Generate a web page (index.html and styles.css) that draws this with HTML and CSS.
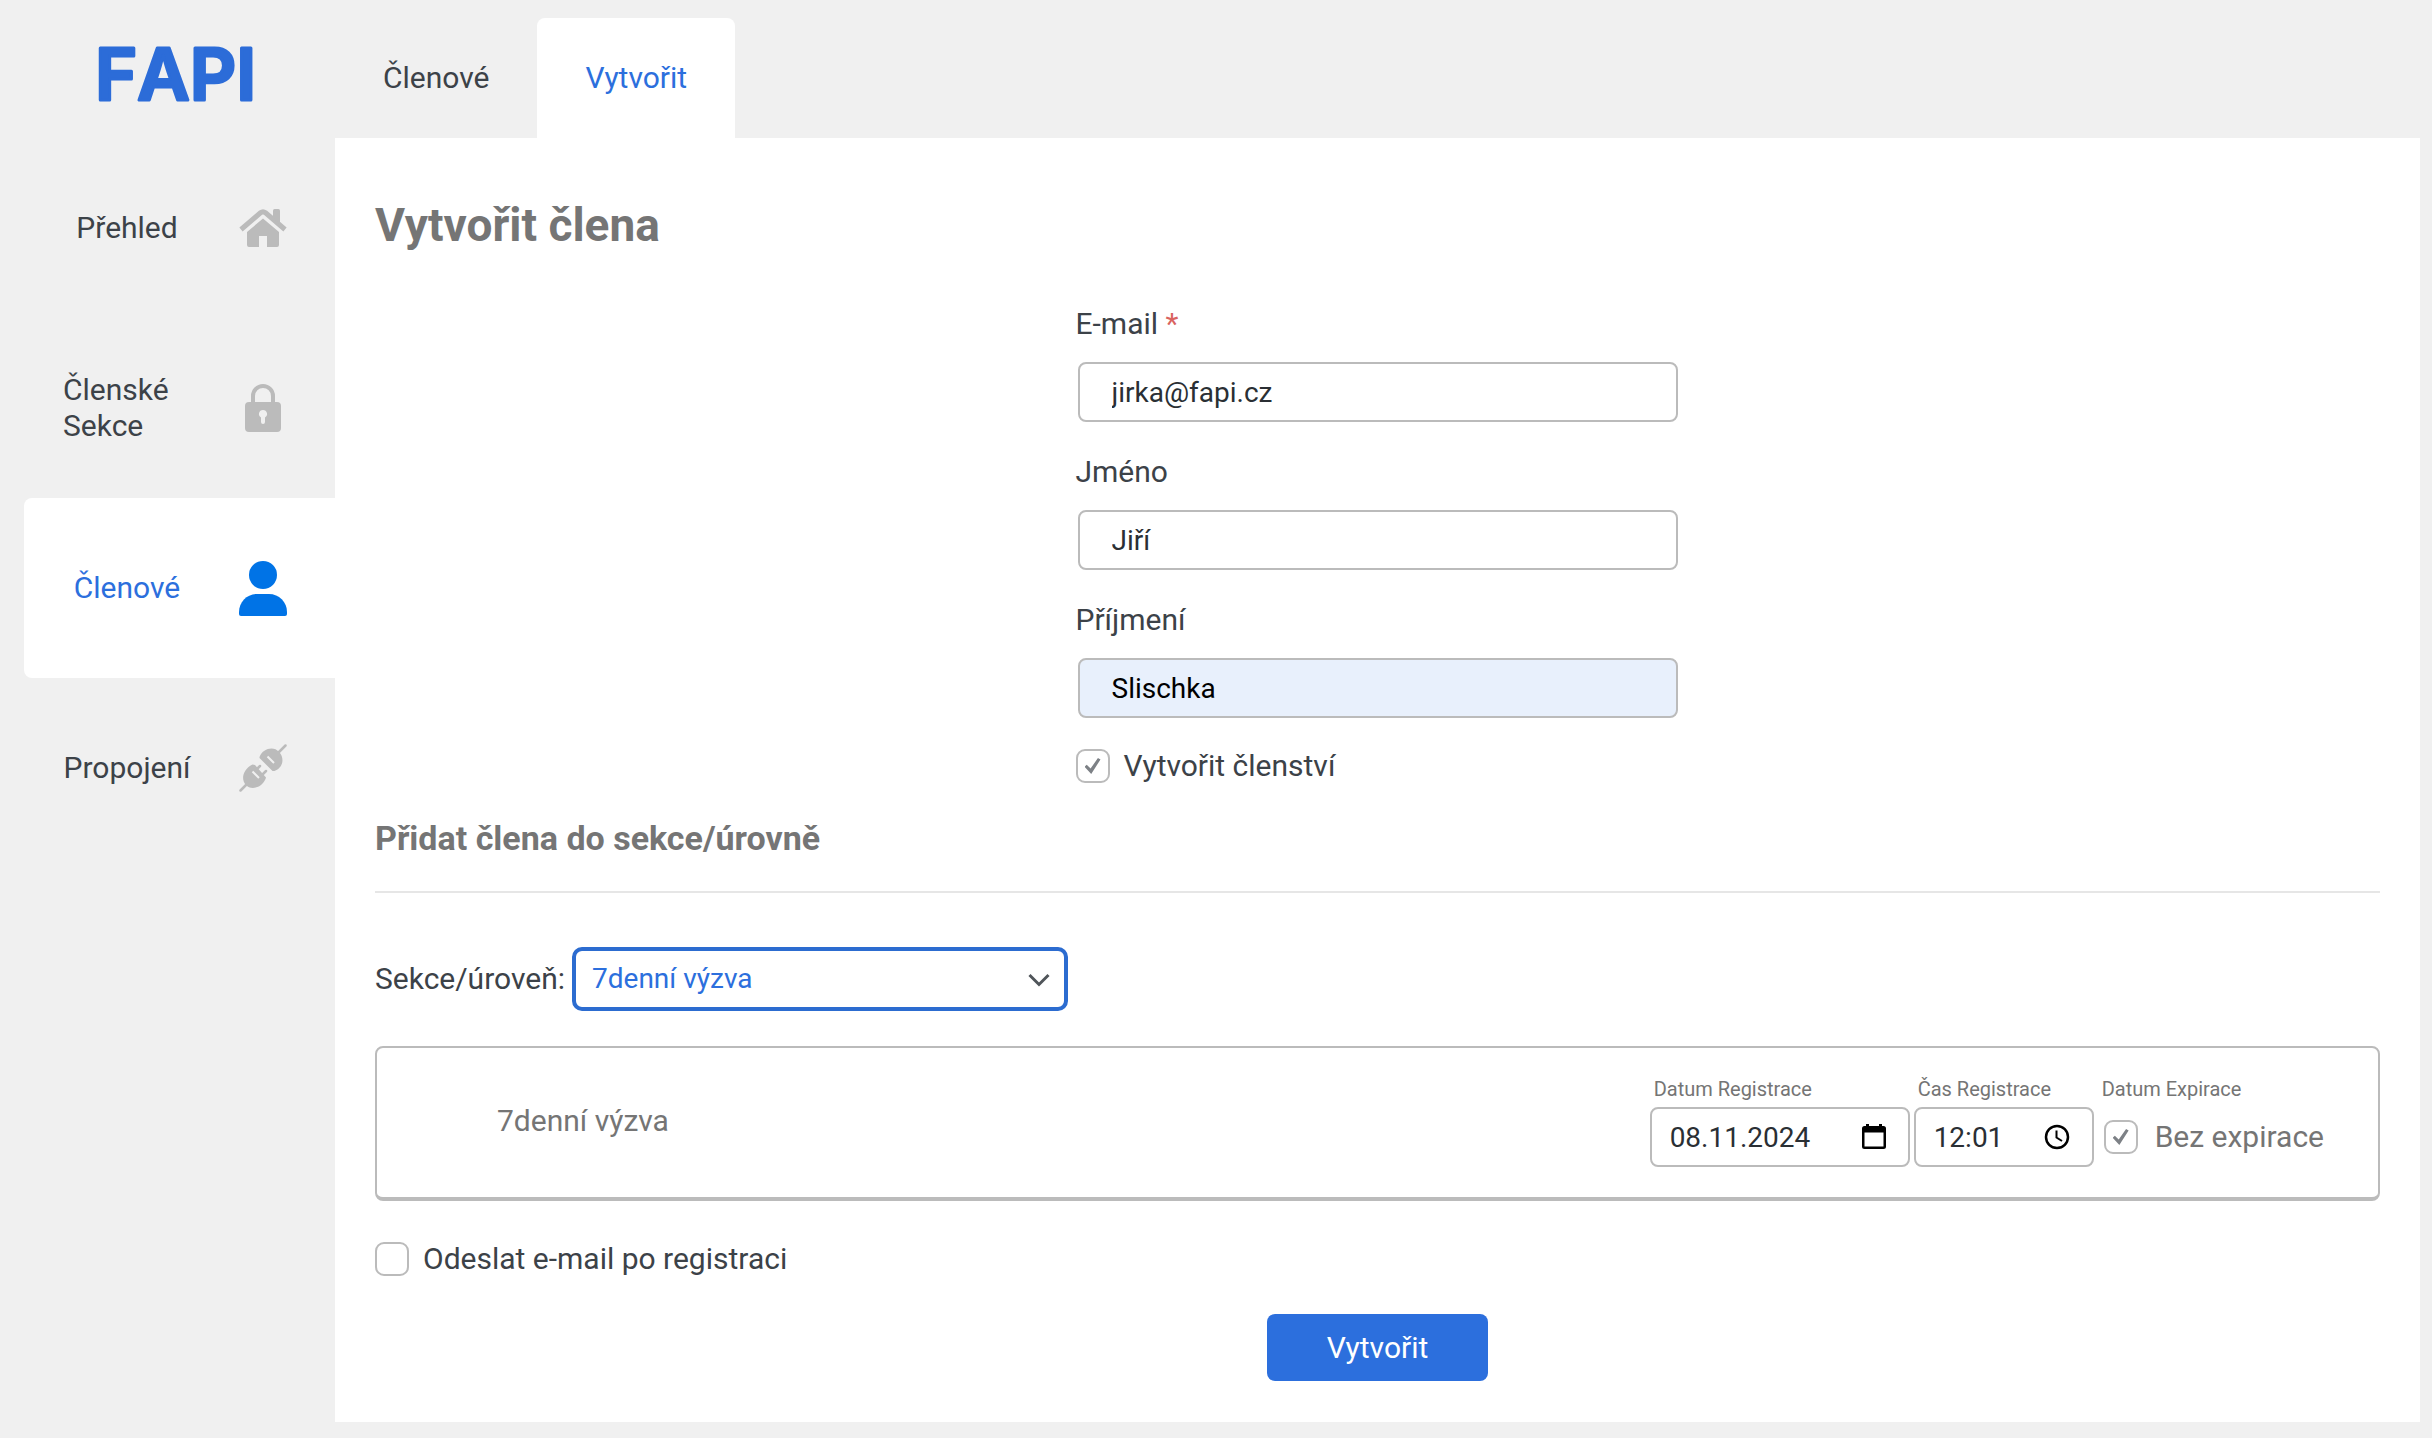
FILE: index.html
```html
<!DOCTYPE html>
<html lang="cs">
<head>
<meta charset="utf-8">
<meta name="viewport" content="width=device-width, initial-scale=1">
<title>FAPI – Vytvořit člena</title>
<link rel="stylesheet" href="styles.css">
</head>
<body>
<div class="app">
  <aside class="sidebar">
    <a class="logo" href="#" aria-label="FAPI">
      <svg width="200" height="138" viewBox="0 0 200 138" aria-hidden="true"><text class="logo-text" x="0" y="100">FAPI</text></svg>
    </a>
    <nav class="menu" aria-label="Hlavní menu">
      <a class="menu-item" href="#">
        <span class="menu-label">Přehled</span>
        <svg class="menu-icon" width="48" height="38" viewBox="0 0 48 38" aria-hidden="true">
          <path d="M2 20.500 L21.500 3.800 Q24 1.800 26.500 3.800 L46 20.500" fill="none" stroke="currentColor" stroke-width="5"/>
          <path d="M34 1.500 Q34 0 35.500 0 H39.500 Q41 0 41 1.500 V15 L34 9 Z" fill="currentColor"/>
          <path d="M24 9.500 L40 23 V36 Q40 38 38 38 H28 V27 H20 V38 H10 Q8 38 8 36 V23 Z" fill="currentColor"/>
        </svg>
      </a>
      <a class="menu-item" href="#">
        <span class="menu-label">Členské Sekce</span>
        <svg class="menu-icon" width="48" height="48" viewBox="0 0 48 48" aria-hidden="true">
          <path d="M14 20 V12 A10 10 0 0 1 34 12 V20" fill="none" stroke="currentColor" stroke-width="4"/>
          <path fill="currentColor" fill-rule="evenodd" d="M10 18 H38 Q42 18 42 22 V44 Q42 48 38 48 H10 Q6 48 6 44 V22 Q6 18 10 18 Z M24 26 A4 4 0 0 0 22 33.500 V38 A2 2 0 0 0 26 38 V33.500 A4 4 0 0 0 24 26 Z"/>
        </svg>
      </a>
      <a class="menu-item is-active" href="#" aria-current="page">
        <span class="menu-label">Členové</span>
        <svg class="menu-icon" width="48" height="56" viewBox="0 -1 48 56" aria-hidden="true">
          <circle cx="24" cy="14" r="14" fill="currentColor"/>
          <path d="M18 33 H30 C40 33 48 41 48 51 V53 Q48 55 46 55 H2 Q0 55 0 53 V51 C0 41 8 33 18 33 Z" fill="currentColor"/>
        </svg>
      </a>
      <a class="menu-item" href="#">
        <span class="menu-label">Propojení</span>
        <svg class="menu-icon" width="48" height="48" viewBox="0 0 48 48" aria-hidden="true">
          <g fill="none" stroke="currentColor" stroke-width="2.500" stroke-linecap="round">
            <path d="M1.500 46.500 L10 38 M38 10 L46.500 1.500 M16 27 L21 22 M22 32 L27 27"/>
          </g>
          <g fill="currentColor">
            <path d="M13.500 20.500 L16 21 L27 33.500 L26.500 35 C22 45 11 46 7 41 C2 36 3 26 13.500 20.500 Z"/>
            <path d="M20.500 13 C24 4 35 2 40 8 C46 14 44 24 35.500 27 L33.500 27 L20.500 14 Z"/>
          </g>
          <path d="M13.500 27.500 L20 34 M28.500 12.500 L35 19" fill="none" stroke="#f0f0f0" stroke-width="2"/>
        </svg>
      </a>
    </nav>
  </aside>

  <div class="page">
    <nav class="tabs" aria-label="Členové">
      <a class="tab" href="#">Členové</a>
      <a class="tab is-active" href="#" aria-current="page">Vytvořit</a>
    </nav>

    <main class="panel">
      <h1 class="title">Vytvořit člena</h1>
      <form>
        <div class="fields">
          <div class="field">
            <label for="email">E-mail <span class="required">*</span></label>
            <input class="input" id="email" type="email" value="jirka@fapi.cz" required>
          </div>
          <div class="field">
            <label for="first">Jméno</label>
            <input class="input" id="first" type="text" value="Jiří">
          </div>
          <div class="field">
            <label for="last">Příjmení</label>
            <input class="input is-autofilled" id="last" type="text" value="Slischka">
          </div>
          <label class="check"><input class="checkbox" type="checkbox" checked>Vytvořit členství</label>
        </div>

        <h2 class="subtitle">Přidat člena do sekce/úrovně</h2>

        <div class="section-row">
          <label for="section">Sekce/úroveň:</label>
          <div class="select-wrap">
            <select class="select" id="section"><option selected>7denní výzva</option></select>
            <svg class="chevron" width="22" height="14" viewBox="0 0 22 14" aria-hidden="true"><path d="M1.500 2 L11 11.500 L20.500 2" fill="none" stroke="currentColor" stroke-width="3"/></svg>
          </div>
        </div>

        <div class="card">
          <span class="card-name">7denní výzva</span>
          <div class="card-fields">
            <div class="mini">
              <label for="reg-date">Datum Registrace</label>
              <div class="mini-control">
                <input class="mini-input date" id="reg-date" type="text" value="08.11.2024">
                <svg class="mini-icon" width="24" height="26" viewBox="0 0 24 26" aria-hidden="true"><path fill="currentColor" fill-rule="evenodd" d="M4 0 H7 V2 H17 V0 H20 V2 H21.500 Q24 2 24 4.500 V22.500 Q24 25 21.500 25 H2.500 Q0 25 0 22.500 V4.500 Q0 2 2.500 2 H4 Z M2.500 8.500 V22.500 H21.500 V8.500 Z"/></svg>
              </div>
            </div>
            <div class="mini">
              <label for="reg-time">Čas Registrace</label>
              <div class="mini-control">
                <input class="mini-input time" id="reg-time" type="text" value="12:01">
                <svg class="mini-icon" width="26" height="26" viewBox="0 0 26 26" aria-hidden="true"><g fill="none" stroke="currentColor"><circle cx="13" cy="13" r="11" stroke-width="2.500"/><path d="M12.500 6.500 V13.500 L18 17" stroke-width="2"/></g></svg>
              </div>
            </div>
            <div class="mini">
              <span>Datum Expirace</span>
              <div class="expiry">
                <label class="check"><input class="checkbox" type="checkbox" checked>Bez expirace</label>
              </div>
            </div>
          </div>
        </div>

        <label class="check"><input class="checkbox" type="checkbox">Odeslat e-mail po registraci</label>
        <button class="submit" type="submit">Vytvořit</button>
      </form>
    </main>
  </div>
</div>
</body>
</html>
```
FILE: styles.css
```css
*, *::before, *::after { box-sizing: border-box; }

body {
  margin: 0;
  background: #f0f0f0;
  color: #3c4248;
  font: 30px/36px Roboto, "Liberation Sans", sans-serif;
}

a { color: inherit; text-decoration: none; }
input, select, button { font: inherit; color: inherit; margin: 0; }

.app { display: flex; min-height: 100vh; }

/* Sidebar */
.sidebar { flex: 0 0 335px; padding-left: 24px; }
.logo { display: block; height: 138px; padding-left: 71px; }
.logo-text {
  font: 600 72px Inter, sans-serif;
  font-kerning: none;
  fill: #2c6cd8;
  stroke: #2c6cd8;
  stroke-width: 3px;
  stroke-linejoin: round;
}
.menu-item {
  display: flex;
  align-items: center;
  gap: 48px;
  height: 180px;
  padding-left: 39px;
  border-radius: 8px 0 0 8px;
}
.menu-label { display: flex; justify-content: center; width: 128px; }
.menu-icon { color: #bbb; }
.menu-item.is-active { background: #fff; color: #2c6fdd; }
.is-active .menu-icon { color: #0073e6; }

/* Page */
.page {
  flex: 1;
  display: flex;
  flex-direction: column;
  min-width: 0;
  padding: 18px 12px 16px 0;
}
.tabs { display: flex; height: 120px; }
.tab { display: flex; align-items: center; padding: 0 48px; border-radius: 8px 8px 0 0; }
.tab.is-active { background: #fff; color: #2c6fdd; }
.panel { flex: 1; padding: 63px 40px 40px; background: #fff; }

.title { margin: 0 0 57px; font-size: 46px; line-height: 48px; color: #757575; }

.fields { width: 604px; margin: 0 auto; }
.field { display: flex; flex-direction: column; gap: 20px; padding: 0 2px 32px; }
.field label { margin: -16px -2px 0; padding-top: 16px; }
.field:last-of-type { padding-bottom: 30px; }
.required { color: #d9635f; }

.input {
  height: 60px;
  padding: 0 32px;
  border: 2px solid #bbb;
  border-radius: 8px;
  background: #fff;
  color: #2a2f34;
  font-size: 28px;
}
.input.is-autofilled { background: #e8f0fc; color: #000; }

.check { display: flex; align-items: center; gap: 14px; }
.checkbox {
  appearance: none;
  display: grid;
  place-items: center;
  width: 34px;
  height: 34px;
  border: 2px solid #bbb;
  border-radius: 9px;
  background: #fff;
}
.checkbox:checked::before {
  content: "";
  width: 16px;
  height: 16px;
  background: #7d8186;
  clip-path: polygon(0 55%, 14% 42%, 38% 66%, 84% 0, 100% 9%, 42% 100%);
}

.subtitle {
  margin: 34px 0 54px;
  padding-bottom: 33px;
  border-bottom: 2px solid #e6e6e6;
  font-size: 34px;
  line-height: 40px;
  color: #757575;
}

.section-row { display: flex; align-items: center; gap: 7px; }
.select-wrap { position: relative; width: 496px; }
.select {
  appearance: none;
  display: block;
  width: 100%;
  height: 64px;
  padding: 0 56px 0 16px;
  border: 4px solid #2c6cd0;
  border-radius: 10px;
  background: #fff;
  color: #2c6fdd;
  font-size: 28px;
}
.chevron { position: absolute; right: 18px; top: 26px; color: #50555a; pointer-events: none; }

.card {
  display: flex;
  justify-content: space-between;
  align-items: center;
  min-height: 155px;
  margin: 35px 0 40px;
  padding: 0 54px 3px 120px;
  border: 2px solid #bbb;
  border-bottom-width: 4px;
  border-radius: 8px;
  color: #757575;
}
.card-fields { display: flex; gap: 4px; }
.mini { display: flex; flex-direction: column; gap: 4px; font-size: 20px; line-height: 28px; }
.mini > label, .mini > span { padding-left: 4px; }
.mini-control { position: relative; }
.mini-input {
  display: block;
  height: 60px;
  padding: 0 18px;
  border: 2px solid #bbb;
  border-radius: 8px;
  background: #fff;
  color: #2a2f34;
  font-size: 28px;
}
.mini-input.date { width: 260px; }
.mini-input.time { width: 180px; }
.mini-icon { position: absolute; right: 24px; top: 17px; color: #000; }
.expiry { display: flex; align-items: center; height: 60px; padding-left: 6px; font-size: 30px; }
.expiry .check { gap: 17px; }

.submit {
  display: block;
  height: 67px;
  margin: 37px auto 0;
  padding: 0 60px;
  border: 0;
  border-radius: 8px;
  background: #2c6fdd;
  color: #fff;
}
```
